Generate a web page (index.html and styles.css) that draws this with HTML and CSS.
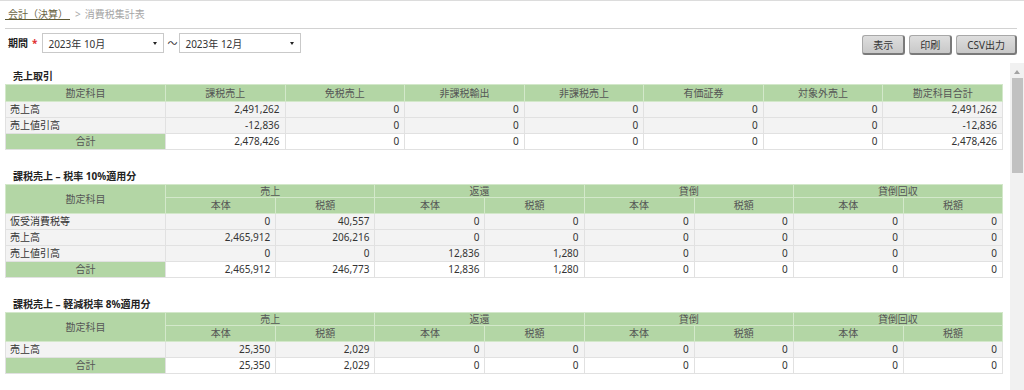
FILE: index.html
```html
<!DOCTYPE html>
<html lang="ja">
<head>
<meta charset="utf-8">
<title>消費税集計表</title>
<link rel="stylesheet" href="styles.css">
</head>
<body>
<header class="page-header">
  <nav class="breadcrumb">
    <span class="crumb-link">会計（決算）</span>
    <span class="crumb-sep">&gt;</span>
    <span class="crumb-current">消費税集計表</span>
  </nav>
  <div class="filter">
    <span class="filter-label">期間<span class="req">*</span></span>
    <div class="select"><span>2023年 10月</span><span class="caret"></span></div>
    <span class="tilde">〜</span>
    <div class="select"><span>2023年 12月</span><span class="caret"></span></div>
    <div class="actions">
      <button class="btn">表示</button>
      <button class="btn">印刷</button>
      <button class="btn">CSV出力</button>
    </div>
  </div>
</header>
<main class="main">
  <div class="content">
    <section class="section">
      <h2 class="section-title">売上取引</h2>
      <table class="grid grid-sales">
        <colgroup><col class="c-label"><col><col><col><col><col><col><col></colgroup>
        <thead>
          <tr class="head-single">
            <th>勘定科目</th><th>課税売上</th><th>免税売上</th><th>非課税輸出</th><th>非課税売上</th><th>有価証券</th><th>対象外売上</th><th>勘定科目合計</th>
          </tr>
        </thead>
        <tbody>
          <tr><td class="label">売上高</td><td>2,491,262</td><td>0</td><td>0</td><td>0</td><td>0</td><td>0</td><td>2,491,262</td></tr>
          <tr><td class="label">売上値引高</td><td>-12,836</td><td>0</td><td>0</td><td>0</td><td>0</td><td>0</td><td>-12,836</td></tr>
          <tr class="total"><th>合計</th><td>2,478,426</td><td>0</td><td>0</td><td>0</td><td>0</td><td>0</td><td>2,478,426</td></tr>
        </tbody>
      </table>
    </section>

    <section class="section">
      <h2 class="section-title">課税売上 – 税率 10%適用分</h2>
      <table class="grid grid-tax">
        <colgroup><col class="c-label"><col class="c-body"><col class="c-tax"><col class="c-body"><col class="c-tax"><col class="c-body"><col class="c-tax"><col class="c-body"><col class="c-tax"></colgroup>
        <thead>
          <tr class="head-group">
            <th rowspan="2">勘定科目</th><th colspan="2">売上</th><th colspan="2">返還</th><th colspan="2">貸倒</th><th colspan="2">貸倒回収</th>
          </tr>
          <tr class="head-sub">
            <th>本体</th><th>税額</th><th>本体</th><th>税額</th><th>本体</th><th>税額</th><th>本体</th><th>税額</th>
          </tr>
        </thead>
        <tbody>
          <tr><td class="label">仮受消費税等</td><td>0</td><td>40,557</td><td>0</td><td>0</td><td>0</td><td>0</td><td>0</td><td>0</td></tr>
          <tr><td class="label">売上高</td><td>2,465,912</td><td>206,216</td><td>0</td><td>0</td><td>0</td><td>0</td><td>0</td><td>0</td></tr>
          <tr><td class="label">売上値引高</td><td>0</td><td>0</td><td>12,836</td><td>1,280</td><td>0</td><td>0</td><td>0</td><td>0</td></tr>
          <tr class="total"><th>合計</th><td>2,465,912</td><td>246,773</td><td>12,836</td><td>1,280</td><td>0</td><td>0</td><td>0</td><td>0</td></tr>
        </tbody>
      </table>
    </section>

    <section class="section">
      <h2 class="section-title">課税売上 – 軽減税率 8%適用分</h2>
      <table class="grid grid-tax">
        <colgroup><col class="c-label"><col class="c-body"><col class="c-tax"><col class="c-body"><col class="c-tax"><col class="c-body"><col class="c-tax"><col class="c-body"><col class="c-tax"></colgroup>
        <thead>
          <tr class="head-group">
            <th rowspan="2">勘定科目</th><th colspan="2">売上</th><th colspan="2">返還</th><th colspan="2">貸倒</th><th colspan="2">貸倒回収</th>
          </tr>
          <tr class="head-sub">
            <th>本体</th><th>税額</th><th>本体</th><th>税額</th><th>本体</th><th>税額</th><th>本体</th><th>税額</th>
          </tr>
        </thead>
        <tbody>
          <tr><td class="label">売上高</td><td>25,350</td><td>2,029</td><td>0</td><td>0</td><td>0</td><td>0</td><td>0</td><td>0</td></tr>
          <tr class="total"><th>合計</th><td>25,350</td><td>2,029</td><td>0</td><td>0</td><td>0</td><td>0</td><td>0</td><td>0</td></tr>
        </tbody>
      </table>
    </section>
  </div>
  <div class="scrollbar">
    <span class="sb-up"></span>
    <span class="sb-thumb"></span>
  </div>
</main>
</body>
</html>
```
FILE: styles.css
```css
* { box-sizing: border-box; }
html, body { margin: 0; padding: 0; }
body {
  height: 390px;
  overflow: hidden;
  border-top: 1px solid #dcdcdc;
  background: #fff;
  color: #333;
  font-family: "Noto Sans", "Noto Sans CJK JP", sans-serif;
  font-size: 10px;
  display: flex;
  flex-direction: column;
}

/* breadcrumb */
.breadcrumb {
  margin: 0 7px 0 5px;
  height: 28px;
  border-bottom: 1px solid #d2d2d2;
  display: flex;
  align-items: flex-start;
  padding-top: 9px;
  line-height: 9px;
}
.crumb-link {
  display: inline-block;
  height: 10px;
  padding: 0 2px 0 3px;
  border-bottom: 1px solid #5e5a34;
  color: #6b6544;
}
.crumb-sep { color: #aaa; margin: 0 4px 0 5px; }
.crumb-current { color: #a5a5a5; }

/* filter */
.filter {
  height: 34px;
  display: flex;
  align-items: flex-start;
  padding: 4px 7px 0 8px;
}
.filter-label {
  font-weight: bold;
  line-height: 20px;
  color: #222;
}
.req { color: #e03030; margin-left: 4px; }
.select {
  margin-left: 5px;
  width: 122px;
  height: 20px;
  border: 1px solid #c9c9c9;
  background: #fff;
  display: flex;
  align-items: center;
  justify-content: space-between;
  padding: 0 6px 0 5px;
  color: #333;
}
.caret {
  width: 0; height: 0;
  border-left: 2.5px solid transparent;
  border-right: 2.5px solid transparent;
  border-top: 3px solid #222;
}
.tilde { line-height: 20px; margin: 0 2px 0 3px; color: #333; }
.tilde + .select { margin-left: 0; }
.actions { margin-left: auto; display: flex; gap: 4px; padding-top: 2px; }
.btn {
  height: 20px;
  padding: 0 10px;
  font: inherit;
  color: #333;
  background: linear-gradient(#dedede, #c8c8c8);
  border: 1px solid #a8a8a8;
  border-right: 2px solid #7a7a7a;
  border-bottom: 2px solid #7a7a7a;
  border-radius: 3px;
  line-height: 16px;
}

/* main area */
.main {
  flex: 1;
  min-height: 0;
  display: flex;
}
.content {
  flex: 1;
  padding: 5px 0 0 5px;
  overflow: hidden;
}
.scrollbar {
  width: 14px;
  background: #f1f1f1;
  display: flex;
  flex-direction: column;
  align-items: center;
}
.sb-up {
  margin-top: 7px;
  width: 0; height: 0;
  border-left: 3.5px solid transparent;
  border-right: 3.5px solid transparent;
  border-bottom: 4px solid #a3a3a3;
}
.sb-thumb {
  margin-top: 4px;
  width: 11px;
  height: 95px;
  background: #c1c1c1;
}

/* sections */
.section + .section { margin-top: 18px; }
.section-title {
  margin: 0;
  height: 16px;
  line-height: 16px;
  padding-left: 8px;
  font-size: 10px;
  font-weight: bold;
  color: #222;
}

/* tables */
.grid {
  width: 998px;
  table-layout: fixed;
  border-collapse: collapse;
}
.c-label { width: 160px; }
.c-body { width: 110px; }
.c-tax { width: 99px; }
.grid th {
  background: #b3d6a5;
  color: #555;
  font-weight: normal;
  text-align: center;
  border: 1px solid #d3e8ca;
  padding: 0;
  line-height: 11px;
}
.grid td {
  background: #f3f3f3;
  border: 1px solid #e1e1e1;
  text-align: right;
  padding: 0 5px;
  line-height: 11px;
  color: #333;
}
.grid td.label { text-align: left; padding-left: 4px; }
.grid tr.total td { background: #fff; }
.grid tr.total th { border-color: #e1e1e1; }
.grid tbody tr { height: 16px; }
.head-single { height: 17px; }
.head-group { height: 13px; }
.head-sub { height: 16px; }
```
